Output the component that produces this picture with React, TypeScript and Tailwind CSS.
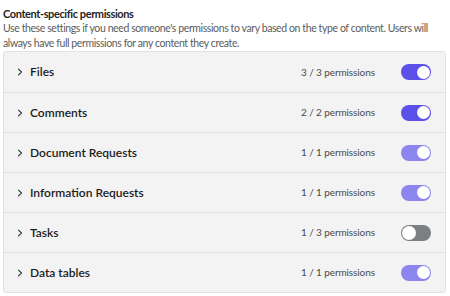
import React from "react";

type Row = { name: string; perms: string; state: "on" | "partial" | "off" };

const rows: Row[] = [
  { name: "Files", perms: "3 / 3 permissions", state: "on" },
  { name: "Comments", perms: "2 / 2 permissions", state: "on" },
  { name: "Document Requests", perms: "1 / 1 permissions", state: "partial" },
  { name: "Information Requests", perms: "1 / 1 permissions", state: "partial" },
  { name: "Tasks", perms: "1 / 3 permissions", state: "off" },
  { name: "Data tables", perms: "1 / 1 permissions", state: "partial" },
];

function Toggle({ state }: { state: Row["state"] }) {
  if (state === "off") {
    return (
      <div className="w-[30px] h-[16px] rounded-full bg-[#7b7f82] flex items-center justify-start p-[1px]">
        <div className="w-[14px] h-[14px] rounded-full bg-white" />
      </div>
    );
  }
  return (
    <div
      className={
        "w-[30px] h-[16px] rounded-full flex items-center justify-end p-[1.5px] " +
        (state === "on" ? "bg-[#5b50ea]" : "bg-[#8d85ef]")
      }
    >
      <div className="w-[13px] h-[13px] rounded-full bg-white" />
    </div>
  );
}

function Chevron() {
  return (
    <svg width="8" height="8" viewBox="0 0 8 8" fill="none" className="shrink-0">
      <path d="M2.5 1.2 L5.5 4 L2.5 6.8" stroke="#333" strokeWidth="1.1" strokeLinecap="round" strokeLinejoin="round" />
    </svg>
  );
}

export default function App() {
  return (
    <div
      className="w-[450px] h-[296px] bg-white px-[3px] pt-[6px]"
      style={{ fontFamily: "Lato, 'Noto Sans', sans-serif" }}
    >
      <div className="text-[11px] leading-[15px] font-bold text-[#1f1f1f] tracking-[-0.4px]">
        Content-specific permissions
      </div>
      <div className="text-[10.5px] leading-[15px] text-[#5c5c5c] tracking-[-0.4px]">
        Use these settings if you need someone's permissions to vary based on the type of content. Users will
        always have full permissions for any content they create.
      </div>
      <div className="w-[443px] border border-[#e1e1e1] rounded-[3px] bg-[#f3f3f3] flex flex-col">
        {rows.map((r, i) => (
          <div
            key={r.name}
            className={
              "h-[40px] flex items-center pl-[12px] pr-[14px] " + (i > 0 ? "border-t border-[#e1e1e1]" : "")
            }
          >
            <Chevron />
            <div className="ml-[6px] text-[12px] font-semibold text-[#1c1c1c] flex-1">{r.name}</div>
            <div className="w-[100px] text-[10px] text-[#4a4a4a] tracking-[-0.1px]">{r.perms}</div>
            <Toggle state={r.state} />
          </div>
        ))}
      </div>
    </div>
  );
}
